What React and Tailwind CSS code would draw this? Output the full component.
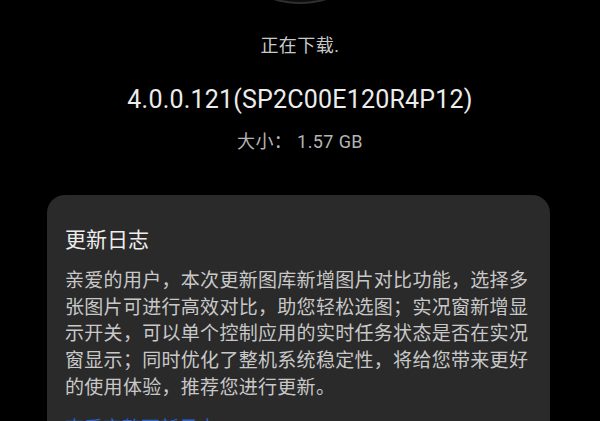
import React from "react";

const lines = [
  "亲爱的用户，本次更新图库新增图片对比功能，选择多",
  "张图片可进行高效对比，助您轻松选图；实况窗新增显",
  "示开关，可以单个控制应用的实时任务状态是否在实况",
  "窗显示；同时优化了整机系统稳定性，将给您带来更好",
  "的使用体验，推荐您进行更新。",
];

const App = () => {
  return (
    <div
      className="w-[600px] h-[421px] overflow-hidden bg-black flex flex-col items-center"
      style={{ fontFamily: "Roboto, 'Noto Sans CJK SC', sans-serif" }}
    >
      <div className="w-[180px] h-[180px] -mt-[176px] shrink-0 rounded-full bg-[#0c0c0c] border-2 border-[#2e2e2e]" />

      <div className="mt-[29px] text-[18px] leading-[26px] text-[#c9c9c9] tracking-[0.5px]">正在下载.</div>

      <div className="mt-[25px] text-[25px] leading-[32px] text-[#ececec] tracking-[0.2px]">
        4.0.0.121(SP2C00E120R4P12)
      </div>

      <div className="mt-[13px] text-[18px] leading-[25px] text-[#b4b4b4] tracking-[0.4px]">
        大小：&nbsp;1.57 GB
      </div>

      <div className="mt-[41px] w-[503px] ml-[-3px] shrink-0 rounded-[18px] bg-[#2a2a2a] pl-[18px] pr-[16px] pt-[31px]">
        <div className="text-[21px] leading-[28px] text-[#ededed]">更新日志</div>
        <div className="mt-[14px] text-[19px] leading-[26.7px] text-[#c8c8c8] tracking-[0.3px]">
          {lines.map((l) => (
            <div key={l} className="whitespace-nowrap">{l}</div>
          ))}
        </div>
        <div className="mt-[14px] text-[19px] leading-[26px] text-[#2f63c9]">查看完整更新日志</div>
      </div>
    </div>
  );
};

export default App;
